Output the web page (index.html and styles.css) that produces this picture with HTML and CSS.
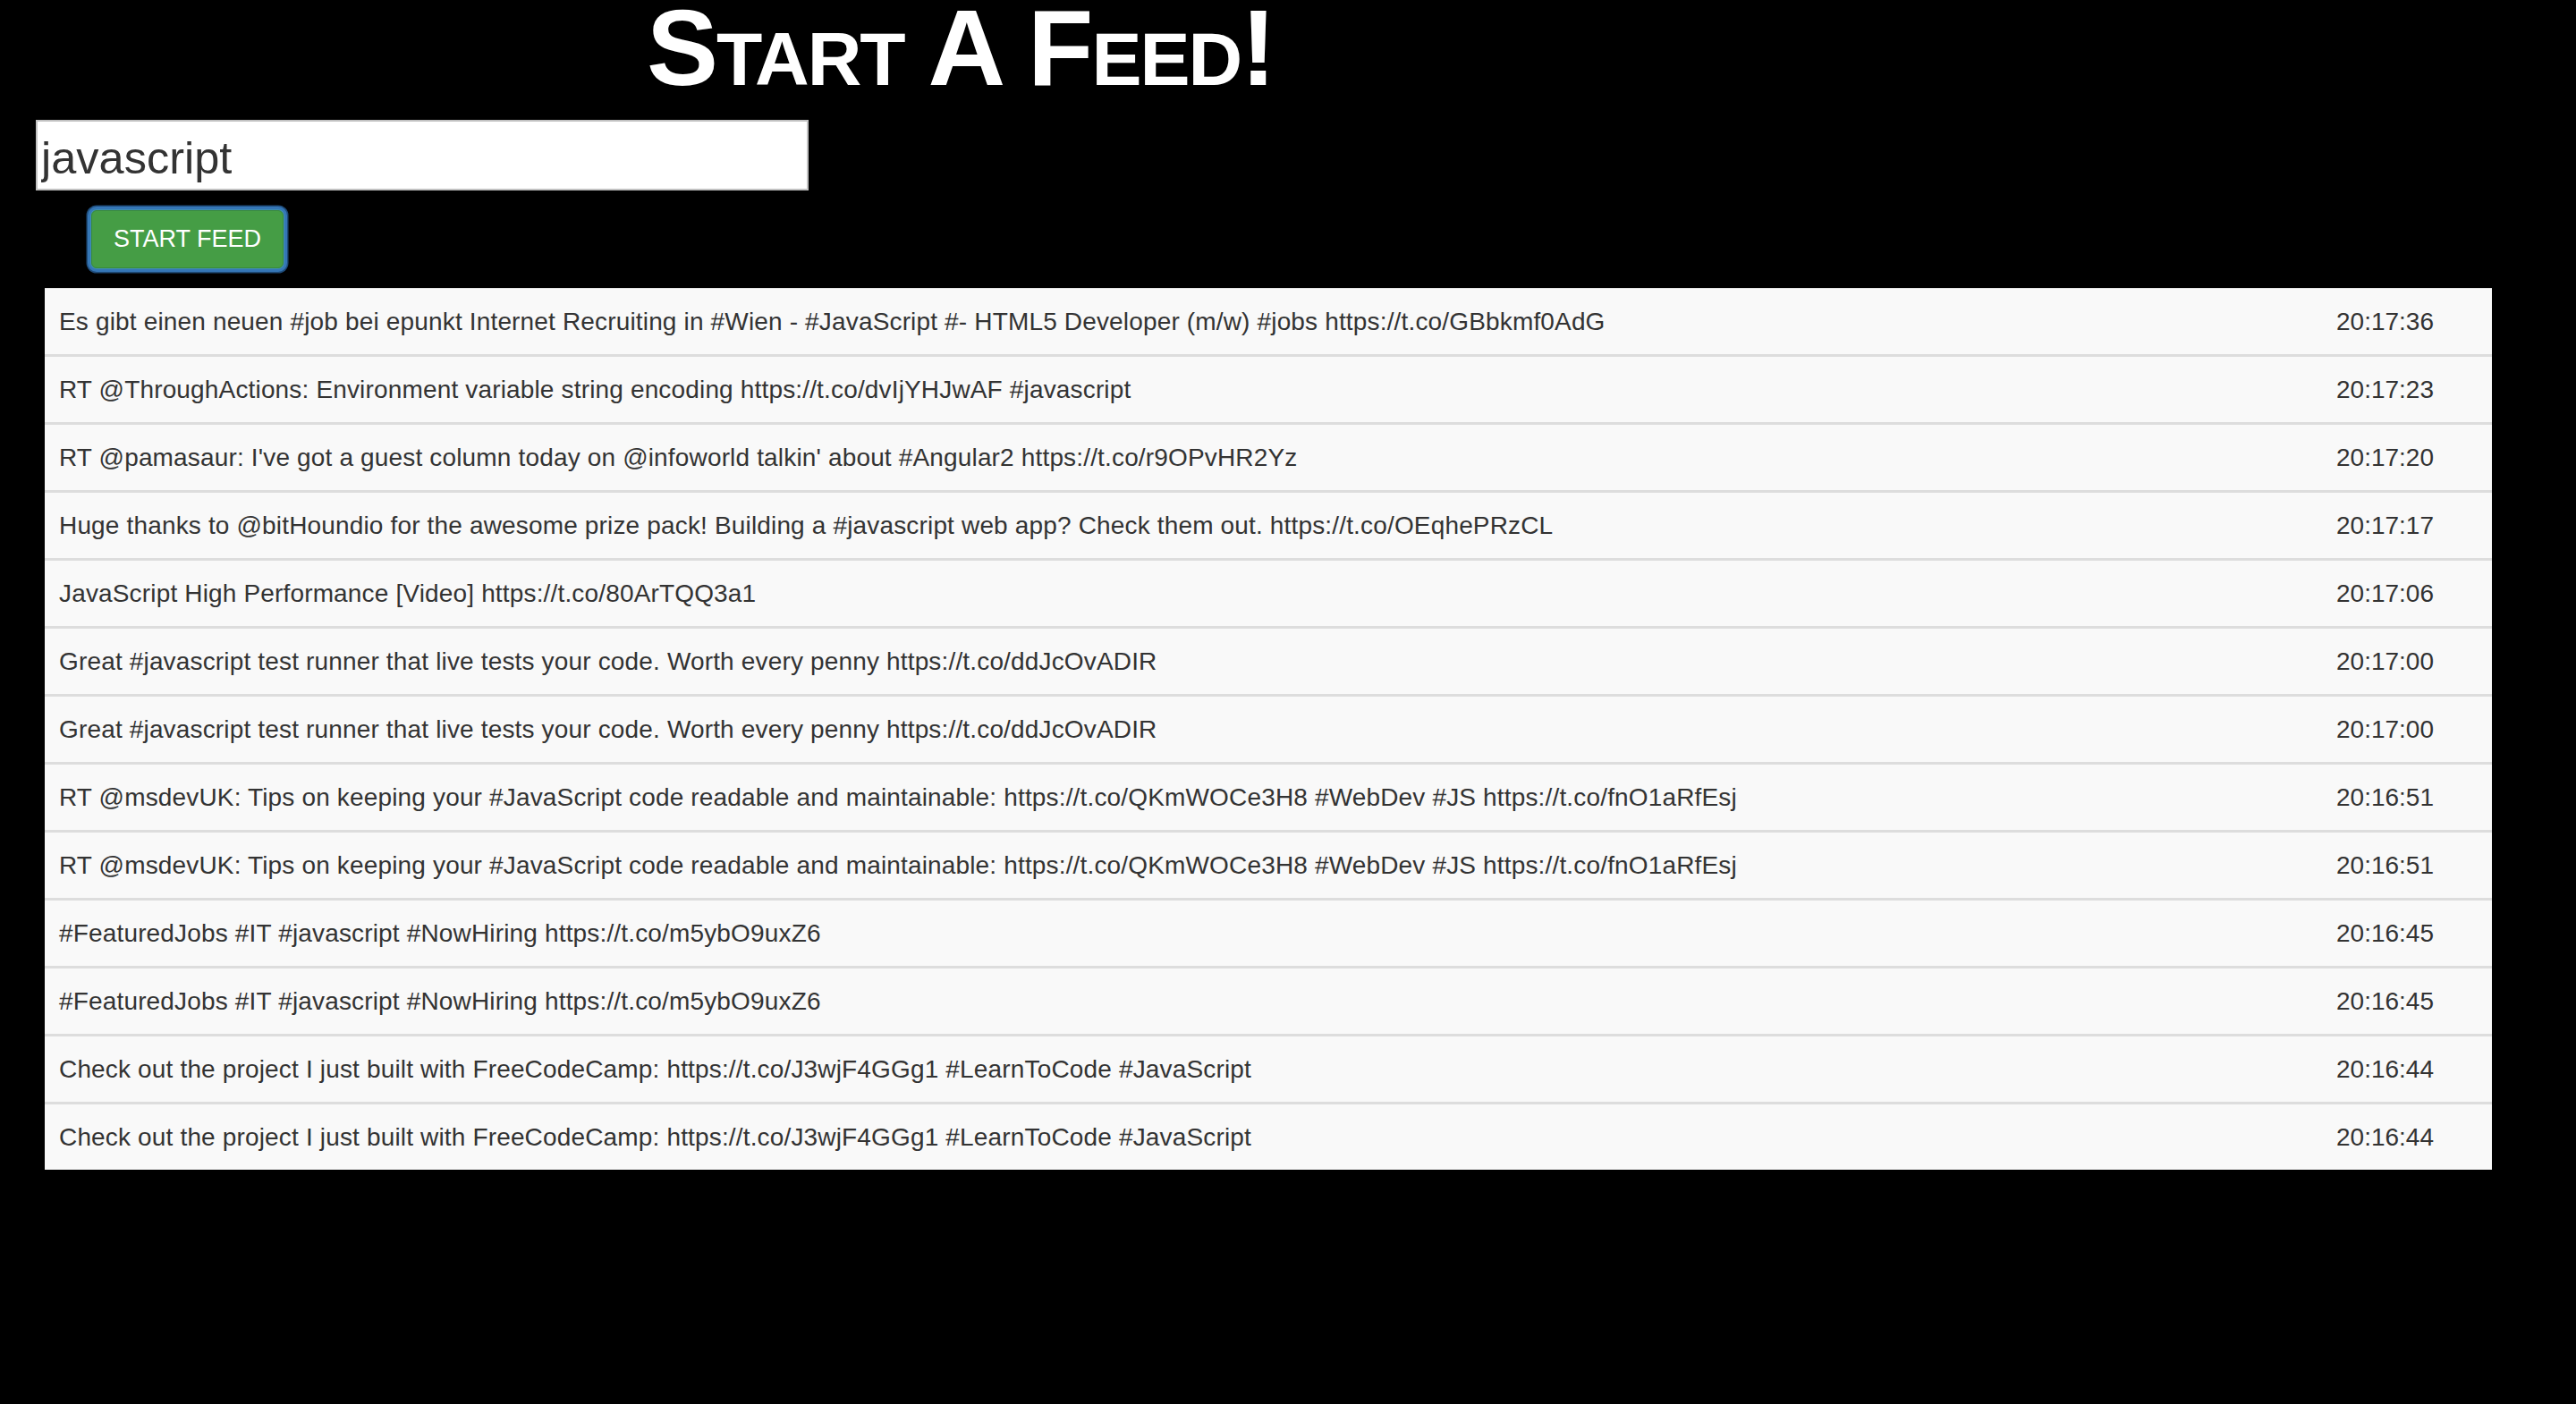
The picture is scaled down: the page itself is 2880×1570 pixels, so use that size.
FILE: index.html
```html
<!DOCTYPE html>
<html>
<head>
<meta charset="utf-8">
<title>Start A Feed!</title>
<link rel="stylesheet" href="styles.css">
</head>
<body>
<header class="header">
  <h1 class="title">Start A Feed!</h1>
</header>
<form class="search">
  <input class="search-input" type="text" value="javascript">
  <button class="btn-start" type="button">START FEED</button>
</form>
<table class="feed">
  <tbody>
    <tr><td class="msg">Es gibt einen neuen #job bei epunkt Internet Recruiting in #Wien - #JavaScript #- HTML5 Developer (m/w) #jobs https://t.co/GBbkmf0AdG</td><td class="time">20:17:36</td></tr>
    <tr><td class="msg">RT @ThroughActions: Environment variable string encoding https://t.co/dvIjYHJwAF #javascript</td><td class="time">20:17:23</td></tr>
    <tr><td class="msg">RT @pamasaur: I've got a guest column today on @infoworld talkin' about #Angular2 https://t.co/r9OPvHR2Yz</td><td class="time">20:17:20</td></tr>
    <tr><td class="msg">Huge thanks to @bitHoundio for the awesome prize pack! Building a #javascript web app? Check them out. https://t.co/OEqhePRzCL</td><td class="time">20:17:17</td></tr>
    <tr><td class="msg">JavaScript High Performance [Video] https://t.co/80ArTQQ3a1</td><td class="time">20:17:06</td></tr>
    <tr><td class="msg">Great #javascript test runner that live tests your code. Worth every penny https://t.co/ddJcOvADIR</td><td class="time">20:17:00</td></tr>
    <tr><td class="msg">Great #javascript test runner that live tests your code. Worth every penny https://t.co/ddJcOvADIR</td><td class="time">20:17:00</td></tr>
    <tr><td class="msg">RT @msdevUK: Tips on keeping your #JavaScript code readable and maintainable: https://t.co/QKmWOCe3H8 #WebDev #JS https://t.co/fnO1aRfEsj</td><td class="time">20:16:51</td></tr>
    <tr><td class="msg">RT @msdevUK: Tips on keeping your #JavaScript code readable and maintainable: https://t.co/QKmWOCe3H8 #WebDev #JS https://t.co/fnO1aRfEsj</td><td class="time">20:16:51</td></tr>
    <tr><td class="msg">#FeaturedJobs #IT #javascript #NowHiring https://t.co/m5ybO9uxZ6</td><td class="time">20:16:45</td></tr>
    <tr><td class="msg">#FeaturedJobs #IT #javascript #NowHiring https://t.co/m5ybO9uxZ6</td><td class="time">20:16:45</td></tr>
    <tr><td class="msg">Check out the project I just built with FreeCodeCamp: https://t.co/J3wjF4GGg1 #LearnToCode #JavaScript</td><td class="time">20:16:44</td></tr>
    <tr><td class="msg">Check out the project I just built with FreeCodeCamp: https://t.co/J3wjF4GGg1 #LearnToCode #JavaScript</td><td class="time">20:16:44</td></tr>
  </tbody>
</table>
</body>
</html>
```

FILE: styles.css
```css
html, body {
  margin: 0;
  padding: 0;
  background: #000;
  font-family: "Liberation Sans", Arial, Helvetica, sans-serif;
  color: #333;
}

.header {
  width: 2148px;
  padding-top: 1px;
  text-align: center;
}

.title {
  margin: 0;
  font-size: 120px;
  line-height: 105px;
  font-weight: bold;
  font-variant: small-caps;
  letter-spacing: -2px;
  color: #fff;
}

.search {
  margin: 28px 0 0 40px;
  display: flex;
  flex-direction: column;
  align-items: flex-start;
}

.search-input {
  box-sizing: border-box;
  width: 864px;
  height: 79px;
  margin: 0;
  padding: 6px 4px 0;
  border: 2px solid #c2c2c2;
  background: #fff;
  font-family: "Liberation Sans", Arial, sans-serif;
  font-size: 50.5px;
  color: #333;
  outline: none;
}

.btn-start {
  box-sizing: border-box;
  margin: 22px 0 0 62px;
  width: 215px;
  height: 65px;
  padding: 0;
  border: 1px solid #3a8a3a;
  border-radius: 6px;
  background: #459d45;
  color: #fff;
  font-family: "Liberation Sans", Arial, sans-serif;
  font-size: 27px;
  box-shadow: 0 0 0 1px #3f8fb3, 0 0 0 4px #3576b6, 0 0 0 5.5px #1f4c7a;
}

.feed {
  margin: 22px 0 0 50px;
  width: 2736px;
  border-collapse: collapse;
  background: #f9f9f9;
  font-size: 28px;
  line-height: 40px;
  letter-spacing: 0.16px;
  color: #333;
}

.feed td {
  padding: 17px 16px 16px;
  border-top: 3px solid #dddddd;
  text-align: left;
  vertical-align: top;
}

.feed tr:first-child td {
  border-top: 1px solid #e4e4e4;
}

.feed .time {
  width: 158px;
  letter-spacing: 0;
}
```
